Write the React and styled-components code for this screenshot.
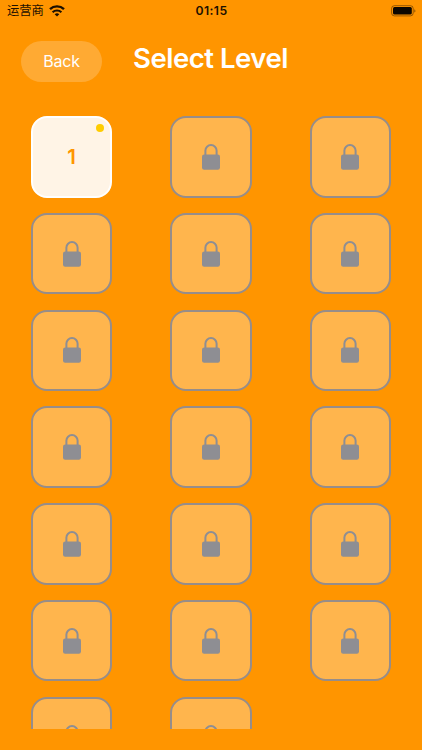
import React from "react";
import styled, { createGlobalStyle } from "styled-components";

const Global = createGlobalStyle`
  * { box-sizing: border-box; }
  html, body { margin: 0; background: #ff9500; overflow: hidden; }
`;

const Screen = styled.main`
  width: 422px;
  height: 750px;
  display: flex;
  flex-direction: column;
  overflow: hidden;
  background: #ff9500;
  font-family: Inter, "Noto Sans CJK SC", sans-serif;
`;

const StatusBar = styled.div`
  height: 21px;
  flex: none;
  display: grid;
  grid-template-columns: 1fr auto 1fr;
  align-items: center;
  padding: 0 6px 0 7px;
  font-size: 12px;
  color: #1c1000;
`;

const Carrier = styled.div`
  display: flex;
  align-items: flex-start;
  gap: 5px;
  height: 21px;
  line-height: 20px;
  font-size: 12.3px;

  svg {
    margin-top: 4.5px;
  }
`;

const CarrierName = styled.span`
  padding-top: 1px;
`;

const Clock = styled.div`
  font-weight: 600;
  font-size: 12.2px;
  line-height: 20px;
  letter-spacing: 0.4px;
`;

const Power = styled.div`
  display: flex;
  justify-content: flex-end;
`;

const Header = styled.header`
  display: flex;
  flex: none;
  height: 82px;
  padding: 20px 0 0 21px;
`;

const BackButton = styled.button`
  width: 81px;
  height: 41px;
  padding: 0;
  border: 0;
  border-radius: 21px;
  background: rgba(255, 255, 255, 0.2);
  color: #fff;
  font: 400 16px/41px Inter, sans-serif;
  letter-spacing: -0.25px;
`;

const Title = styled.h1`
  margin: 0 0 0 31px;
  color: #fff;
  font-size: 27.5px;
  font-weight: 600;
  line-height: 35px;
  letter-spacing: -0.48px;
  white-space: nowrap;
`;

const LevelList = styled.section`
  height: 626px;
  flex: none;
  overflow: hidden;
  padding: 13px 0 0 30.8px;
  display: grid;
  grid-template-columns: repeat(3, 81.6px);
  grid-auto-rows: 81.5px;
  column-gap: 57.8px;
  row-gap: 15.3px;
`;

const Tile = styled.div`
  position: relative;
  display: flex;
  align-items: center;
  justify-content: center;
  border-radius: 16px;
  border: 2px solid ${(p) => (p.$open ? "#fff" : "#968d8a")};
  background: ${(p) => (p.$open ? "#fff4e6" : "#ffb54d")};
  color: #ff9500;
  font-size: 20.4px;
  font-weight: 600;
`;

const Dot = styled.span`
  position: absolute;
  top: 6.2px;
  right: 6.2px;
  width: 8.2px;
  height: 8.2px;
  border-radius: 50%;
  background: #ffcc00;
`;

const LockIcon = () => (
  <svg width="18" height="26" viewBox="0 0 18 26">
    <path d="M3.4 12V6.6a5.6 5.5 0 0 1 11.2 0V12" fill="none" stroke="#8e8e93" strokeWidth="2" />
    <rect x="0" y="10.4" width="18" height="15.4" rx="2.2" fill="#8e8e93" />
  </svg>
);

const WifiIcon = () => (
  <svg width="16" height="12" viewBox="0 0 16 12" fill="none" stroke="#1c1000">
    <path d="M1 4.2a10.2 10.2 0 0 1 14 0" strokeWidth="2.4" />
    <path d="M3.6 7.2a6.4 6.4 0 0 1 8.8 0" strokeWidth="2.1" />
    <path d="M8 11.6 5.7 9.2a3.4 3.4 0 0 1 4.6 0z" fill="#1c1000" stroke="none" />
  </svg>
);

const BatteryIcon = () => (
  <svg width="25" height="12" viewBox="0 0 25 12">
    <rect x="0.6" y="0.7" width="21.6" height="10.2" rx="2.8" fill="none" stroke="#1c1000" strokeOpacity="0.45" />
    <rect x="2" y="2.1" width="18.8" height="7.4" rx="1.5" fill="#0c0700" />
    <path d="M23.3 4.2v3.4c1.5-.6 1.5-2.8 0-3.4z" fill="#1c1000" fillOpacity="0.5" />
  </svg>
);

const levels = Array.from({ length: 20 }, (_, i) => i + 1);

export default function App() {
  return (
    <Screen>
      <Global />
      <StatusBar>
        <Carrier>
          <CarrierName>运营商</CarrierName>
          <WifiIcon />
        </Carrier>
        <Clock>01:15</Clock>
        <Power>
          <BatteryIcon />
        </Power>
      </StatusBar>
      <Header>
        <BackButton>Back</BackButton>
        <Title>Select Level</Title>
      </Header>
      <LevelList>
        {levels.map((level) => (
          <Tile key={level} $open={level === 1}>
            {level === 1 ? (
              <>
                {level}
                <Dot />
              </>
            ) : (
              <LockIcon />
            )}
          </Tile>
        ))}
      </LevelList>
    </Screen>
  );
}
